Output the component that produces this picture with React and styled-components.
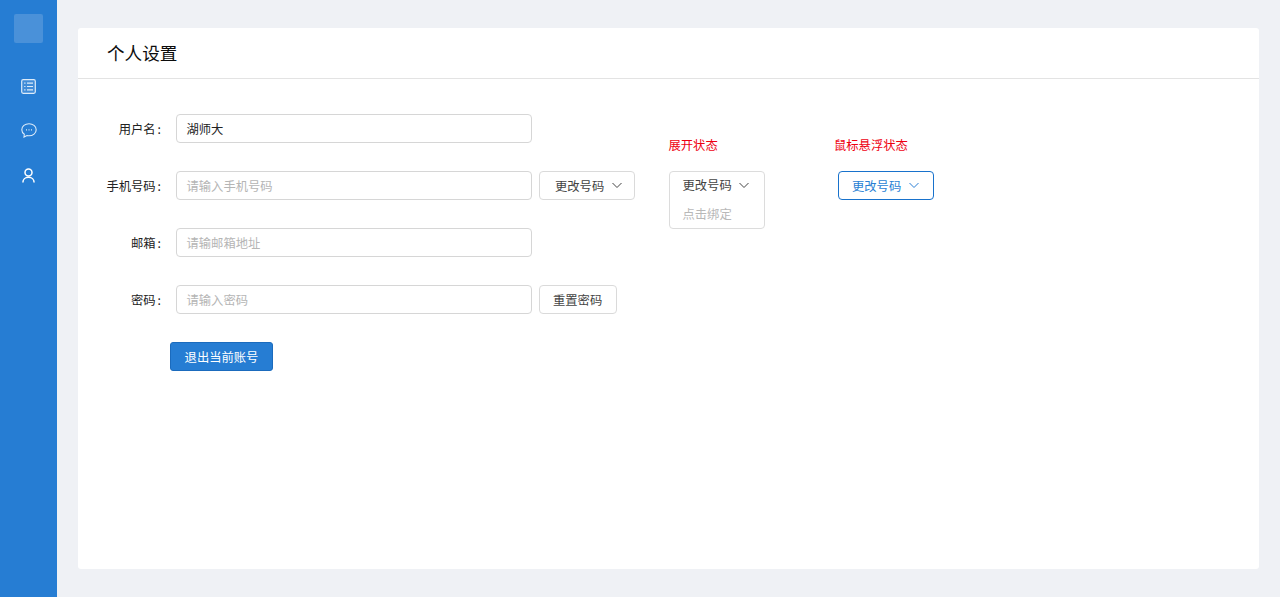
import React from 'react';
import styled, { createGlobalStyle } from 'styled-components';

const Global = createGlobalStyle`
  html, body { margin: 0; padding: 0; height: 100%; }
  body { font-family: "Noto Sans CJK SC", "Liberation Sans", sans-serif; background: #eff1f5; overflow: hidden; }
  * { box-sizing: border-box; }
`;
const Page = styled.div`display: flex; height: 597px; background: #eff1f5;`;
const Sidebar = styled.aside`
  width: 57px; flex: none; background: #267dd3; display: flex; flex-direction: column; align-items: center; padding-top: 14px;
`;
const Logo = styled.div`width: 29px; height: 29px; border-radius: 2px; background: #4a91d9; margin-bottom: 21px;`;
const NavIcon = styled.div`
  width: 57px; height: 44.5px; display: flex; align-items: center; justify-content: center; color: ${p => p.$color || '#dcebf9'};
`;
const Main = styled.main`flex: 1; padding: 28px 21px; display: flex;`;
const Card = styled.section`flex: 1; background: #fff; border-radius: 3px; display: flex; flex-direction: column;`;
const Header = styled.header`
  height: 51px; border-bottom: 1px solid #e3e3e3; display: flex; align-items: center; padding: 0 0 2px 29px;
  font-size: 17.6px; color: #0c0c0c;
`;
const Body = styled.div`display: flex; padding: 35px 0 0 28px; align-items: flex-start;`;
const Form = styled.div`display: flex; flex-direction: column; gap: 28px; width: 562.5px;`;
const Row = styled.div`display: flex; align-items: center; height: 29px;`;
const Label = styled.label`
  width: 70px; flex: none; display: flex; justify-content: flex-end; padding-right: 15px; font-size: 12.3px; color: #222; white-space: nowrap;
  &::after { content: ':'; margin-left: 2px; }
`;
const Input = styled.div`
  width: 356px; height: 29px; flex: none; border: 1px solid #d6d6d6; border-radius: 4px; padding-left: 9.5px;
  display: flex; align-items: center; font-size: 12.3px; color: ${p => (p.$filled ? '#222' : '#b5b5b5')}; background: #fff;
`;
const OutlineButton = styled.div`
  height: 29px; margin-left: 7px; border: 1px solid #dadada; border-radius: 4px; display: flex; align-items: center; font-size: 12.3px; color: #444;
  padding: ${p => p.$pad || '0 13px'}; width: ${p => p.$w}px; gap: 8px;
`;
const Primary = styled.div`
  width: 103px; height: 29px; margin-left: 64px; background: #267dd3; border: 1px solid #1b6bbd; border-radius: 3px; color: #fff; font-size: 12.3px;
  display: flex; align-items: center; justify-content: center;
`;
const StateColumn = styled.div`display: flex; flex-direction: column; align-items: flex-start; width: ${p => p.$w}px; padding-top: 23px;`;
const Caption = styled.div`font-size: 12.3px; color: #ee0011; line-height: 16px; height: 34px; margin-left: ${p => p.$ml || 0}px;`;
const DropBox = styled.div`
  width: 96px; height: 58px; border: 1px solid #dcdcdc; border-radius: 4px; padding: 0 13px; font-size: 12.3px; color: #444;
  display: flex; flex-direction: column;
`;
const DropHead = styled.div`height: 27px; display: flex; align-items: center; gap: 7px;`;
const DropItem = styled.div`height: 28px; margin-top: 2px; display: flex; align-items: center; color: #b8b8b8;`;
const HoverButton = styled.div`
  width: 96px; height: 29px; margin-left: 4px; border: 1px solid #1872cc; border-radius: 4px; color: #2a7fd4; font-size: 12.3px;
  display: flex; align-items: center; padding-left: 13px; gap: 8px;
`;

const Chevron = ({ color = '#444' }) => (
  <svg width="10" height="7" viewBox="0 0 10 7" fill="none" stroke={color} strokeWidth="1">
    <path d="M.5 1L5 5.500 9.500 1" />
  </svg>
);
const ListIcon = () => (
  <svg width="15" height="15" viewBox="0 0 15 15" fill="rgba(255,255,255,.12)" stroke="currentColor" strokeWidth="1.200">
    <rect x=".7" y=".7" width="13.600" height="13.600" rx="1.500" />
    <path d="M3.200 4.200h1.300M3.200 7.500h1.300M3.200 10.800h1.300M6 4.200h6M6 7.500h6M6 10.800h6" />
  </svg>
);
const ChatIcon = () => (
  <svg width="16" height="15" viewBox="0 0 16 15" fill="none" stroke="currentColor" strokeWidth="1.100">
    <path d="M8 .7C4 .7 .8 3.200 .8 6.700c0 1.900 1 3.500 2.500 4.500l-.3 2.900 3-1.500c.6.1 1.300.2 2 .2 3.900 0 7.200-2.600 7.200-6.100S11.900 .7 8 .7z" />
    <path d="M5 6.800h1M7.500 6.800h1M10 6.800h1" strokeWidth="1.200" />
  </svg>
);
const UserIcon = () => (
  <svg width="13" height="15" viewBox="0 0 13 15" fill="none" stroke="currentColor" strokeWidth="1.500">
    <circle cx="6.500" cy="4.400" r="3.500" />
    <path d="M.9 14.500c0-2.900 2.300-5.200 5.600-5.200s5.600 2.300 5.600 5.200" />
  </svg>
);

export default function App() {
  return (
    <Page>
      <Global />
      <Sidebar>
        <Logo />
        <NavIcon><ListIcon /></NavIcon>
        <NavIcon><ChatIcon /></NavIcon>
        <NavIcon $color="#ffffff"><UserIcon /></NavIcon>
      </Sidebar>
      <Main>
        <Card>
          <Header>个人设置</Header>
          <Body>
            <Form>
              <Row><Label>用户名</Label><Input $filled>湖师大</Input></Row>
              <Row>
                <Label>手机号码</Label><Input>请输入手机号码</Input>
                <OutlineButton $w={96} $pad="0 0 0 15px">更改号码<Chevron /></OutlineButton>
              </Row>
              <Row><Label>邮箱</Label><Input>请输邮箱地址</Input></Row>
              <Row>
                <Label>密码</Label><Input>请输入密码</Input>
                <OutlineButton $w={78}>重置密码</OutlineButton>
              </Row>
              <Row><Primary>退出当前账号</Primary></Row>
            </Form>
            <StateColumn $w={165.5}>
              <Caption>展开状态</Caption>
              <DropBox>
                <DropHead>更改号码<Chevron /></DropHead>
                <DropItem>点击绑定</DropItem>
              </DropBox>
            </StateColumn>
            <StateColumn $w={110}>
              <Caption>鼠标悬浮状态</Caption>
              <HoverButton>更改号码<Chevron color="#2a7fd4" /></HoverButton>
            </StateColumn>
          </Body>
        </Card>
      </Main>
    </Page>
  );
}
